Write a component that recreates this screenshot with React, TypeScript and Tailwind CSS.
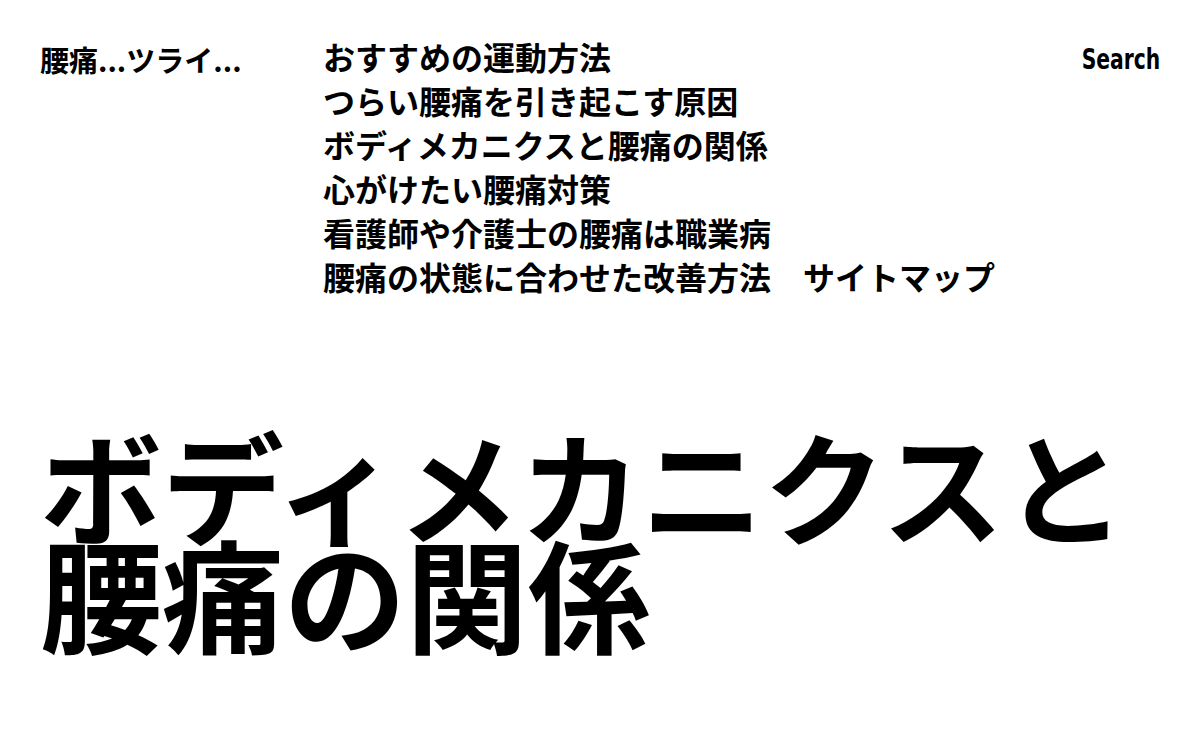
import React from 'react';

const navItems = [
  'おすすめの運動方法',
  'つらい腰痛を引き起こす原因',
  'ボディメカニクスと腰痛の関係',
  '心がけたい腰痛対策',
  '看護師や介護士の腰痛は職業病',
  '腰痛の状態に合わせた改善方法',
  'サイトマップ',
];

const jp = { fontFamily: '"Noto Sans CJK JP", "Noto Sans", sans-serif' };

export default function App() {
  return (
    <div className="min-h-[740px] bg-white text-black" style={jp}>
      <header className="flex items-start px-10 pt-[34px]">
        <div className="w-[283px] shrink-0 text-[29px] font-bold leading-[50px]">
          腰痛...ツライ...
        </div>
        <nav className="flex w-[700px] flex-wrap gap-x-[32px]">
          {navItems.map((item) => (
            <a key={item} href="#" className="text-[32px] font-bold leading-[44px]">
              {item}
            </a>
          ))}
        </nav>
        <div className="ml-auto">
          <button
            className="origin-right scale-x-[0.7] text-[29px] font-black leading-[50px]"
            style={{ fontFamily: '"DejaVu Sans", sans-serif' }}
          >
            Search
          </button>
        </div>
      </header>
      <main className="px-10 pt-[131px]">
        <h1 className="text-[122px] font-bold leading-[108px]">
          ボディメカニクスと
          <br />
          腰痛の関係
        </h1>
      </main>
    </div>
  );
}
